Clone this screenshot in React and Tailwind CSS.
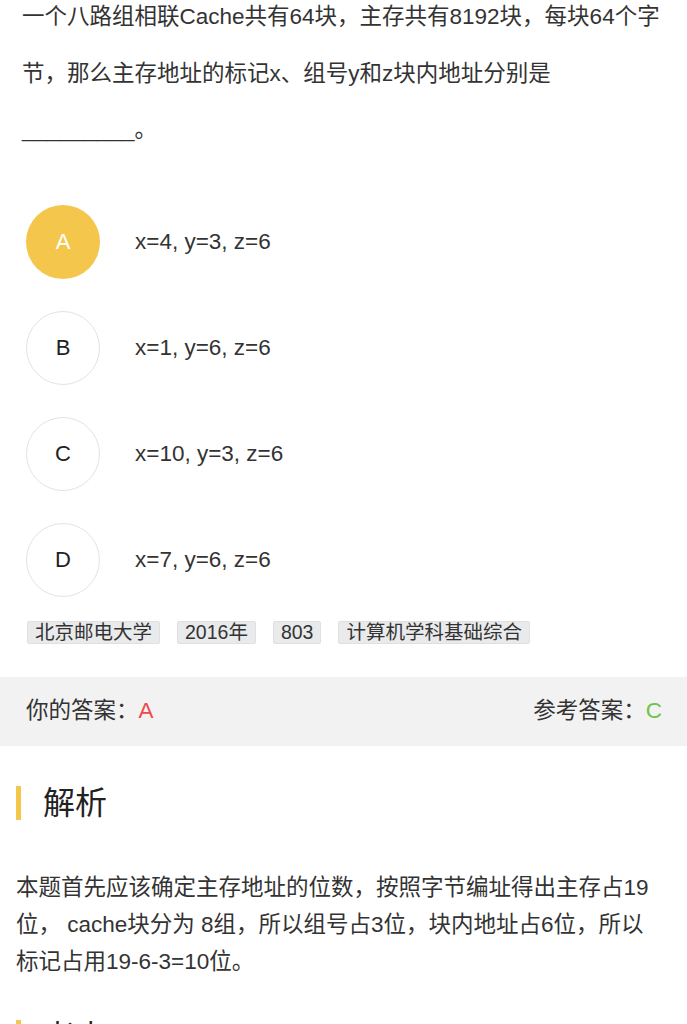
import React from "react";

const options = [
  { key: "A", text: "x=4, y=3, z=6", picked: true },
  { key: "B", text: "x=1, y=6, z=6" },
  { key: "C", text: "x=10, y=3, z=6" },
  { key: "D", text: "x=7, y=6, z=6" },
];

const tags = ["北京邮电大学", "2016年", "803", "计算机学科基础综合"];

const App = () => {
  return (
    <div
      className="w-[687px] h-[1024px] overflow-hidden bg-white text-[#333]"
      style={{ fontFamily: '"Liberation Sans", "Noto Sans CJK SC", sans-serif' }}
    >
      {/* QUESTION */}
      <div className="-mt-[11px] px-[22px] text-[22.5px] leading-[56.5px]">
        一个八路组相联Cache共有64块，主存共有8192块，每块64个字节，那么主存地址的标记x、组号y和z块内地址分别是
        <br />
        _________。
      </div>

      {/* OPTIONS */}
      <div className="mt-[30px] px-[26px]">
        {options.map((o) => (
          <div key={o.key} className="flex items-center h-[106px]">
            <div
              className={`w-[74px] h-[74px] rounded-full flex items-center justify-center text-[22px] ${
                o.picked
                  ? "bg-[#f4c64c] text-white"
                  : "border border-[#e3e3e3] text-[#222]"
              }`}
            >
              {o.key}
            </div>
            <span className="ml-[35px] text-[22.5px] text-[#333]">{o.text}</span>
          </div>
        ))}
      </div>

      {/* TAGS */}
      <div className="flex gap-[17px] px-[27px] mt-[8px]">
        {tags.map((t) => (
          <span
            key={t}
            className="h-[23px] px-[7px] bg-[#e9eaec] border border-[#e0e0e0] rounded-[2px] text-[19.5px] leading-[21px] text-[#333]"
          >
            {t}
          </span>
        ))}
      </div>

      {/* ANSWER BAR */}
      <div className="mt-[33px] h-[69px] bg-[#f2f2f2] flex items-center justify-between pl-[26px] pr-[25px] text-[22.5px]">
        <span>
          你的答案：<span className="text-[#ee4a4a]">A</span>
        </span>
        <span>
          参考答案：<span className="text-[#6cc44a]">C</span>
        </span>
      </div>

      {/* ANALYSIS */}
      <div className="mt-[40px] pl-[16px] pr-[24px]">
        <div className="flex items-center h-[34px]">
          <div className="w-[5px] h-[34px] bg-[#f4c64c]"></div>
          <h2 className="ml-[22px] text-[32px] leading-[34px] text-[#222]">解析</h2>
        </div>
        <p className="mt-[49px] text-[22.5px] leading-[37px] text-[#333]">
          本题首先应该确定主存地址的位数，按照字节编址得出主存占19位， cache块分为 8组，所以组号占3位，块内地址占6位，所以标记占用19-6-3=10位。
        </p>
        <div className="flex items-center h-[34px] mt-[40px]">
          <div className="w-[5px] h-[34px] bg-[#f4c64c]"></div>
          <h2 className="ml-[22px] text-[32px] leading-[34px] text-[#222]">考点</h2>
        </div>
      </div>
    </div>
  );
};

export default App;
